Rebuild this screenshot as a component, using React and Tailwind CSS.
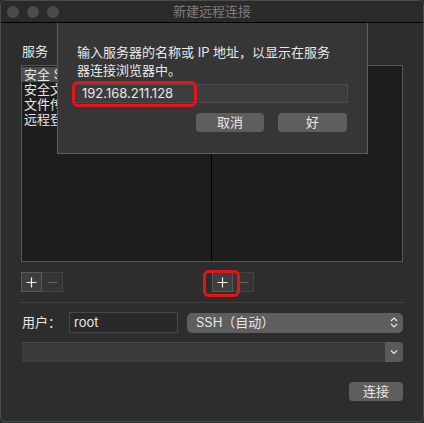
import React from 'react';

const services = ['安全 Shell (ssh)', '安全文件传输 (sftp)', '文件传输 (ftp)', '远程登录 (telnet)'];

// small +/- segmented control under each column
const PlusMinus = ({ highlight }) => (
  <div className="flex">
    <div className="relative w-[21px] h-[20px] bg-[#3e3e3e] border border-[#595959] flex items-center justify-center">
      <svg width="11" height="11" viewBox="0 0 11 11">
        <path d="M5.5 0.5v10M0.5 5.5h10" stroke="#f0f0f0" strokeWidth="1.2" />
      </svg>
      {highlight && (
        <div className="absolute -left-[10px] -top-[3px] w-[37px] h-[27px] border-[3px] border-[#e3151b] rounded-[6px]" />
      )}
    </div>
    <div className="w-[21px] h-[20px] bg-[#343434] border border-l-0 border-[#444] flex items-center justify-center">
      <svg width="11" height="11" viewBox="0 0 11 11">
        <path d="M0.5 5.5h10" stroke="#646464" strokeWidth="1.2" />
      </svg>
    </div>
  </div>
);

export default function App() {
  return (
    <div className="w-[424px] h-[423px] bg-[#24302a] font-[Inter,'Noto_Sans_CJK_SC',sans-serif] text-[13px] text-[#e8e8e8]">
      <div className="relative w-[424px] h-[422px] rounded-[5px] border border-[#4a4a4a] bg-[#2e2d2d] overflow-hidden flex flex-col">
        {/* title bar */}
        <div className="h-[22px] shrink-0 flex items-center border-b border-black bg-[#2b2a2a]">
          <div className="w-[70px] pl-[6px] flex gap-[8px]">
            <span className="w-[12px] h-[12px] rounded-full bg-[#4b4b4b]" />
            <span className="w-[12px] h-[12px] rounded-full bg-[#4b4b4b]" />
            <span className="w-[12px] h-[12px] rounded-full bg-[#4b4b4b]" />
          </div>
          <div className="flex-1 text-center text-[#7e7e7e] leading-[21px]">新建远程连接</div>
          <div className="w-[70px]" />
        </div>

        <div className="flex flex-col px-[20px] pt-[20px]">
          <div className="h-[17px] leading-[17px] pl-[1px]">服务</div>

          {/* services / servers table */}
          <div className="mt-[5px] h-[197px] grid grid-cols-2 border border-[#585858] bg-[#1e1d1d]">
            <div className="border-r border-black pt-[1px] overflow-hidden">
              {services.map((s, i) => (
                <div
                  key={s}
                  className={`h-[15px] leading-[15px] pl-[2px] whitespace-nowrap ${i === 0 ? 'bg-[#4e4e4e]' : ''}`}
                >
                  {s}
                </div>
              ))}
            </div>
            <div />
          </div>

          <div className="mt-[10px] grid grid-cols-2">
            <PlusMinus />
            <div className="pl-[0px]">
              <PlusMinus highlight />
            </div>
          </div>

          <div className="mt-[10px] -mx-[1px] h-px bg-[#414141]" />

          {/* user row */}
          <div className="mt-[9px] h-[21px] flex items-center">
            <div className="w-[48px] pl-[1px]">用户：</div>
            <div className="w-[109px] h-[21px] bg-[#2a2929] border border-[#474747] flex items-center pl-[4px]">
              root
            </div>
            <div className="ml-[9px] w-[216px] h-[20px] rounded-[5px] bg-[#5e5e5e] flex items-center justify-between pl-[9px] pr-[5px]">
              <span>SSH（自动）</span>
              <svg width="8" height="13" viewBox="0 0 8 13">
                <path d="M1 5L4 2L7 5M1 8L4 11L7 8" fill="none" stroke="#e8e8e8" strokeWidth="1.2" />
              </svg>
            </div>
          </div>

          {/* server address combo box */}
          <div className="mt-[9px] ml-[1px] w-[381px] h-[20px] flex">
            <div className="flex-1 bg-[#3b3a3a] border-t border-[#4a4a4a]" />
            <div className="w-[18px] bg-[#5a5a5a] rounded-r-[4px] flex items-center justify-center">
              <svg width="8" height="6" viewBox="0 0 8 6">
                <path d="M1 1.5L4 4.5L7 1.5" fill="none" stroke="#e8e8e8" strokeWidth="1.2" />
              </svg>
            </div>
          </div>

          <div className="mt-[20px] self-end w-[54px] h-[19px] rounded-[4px] bg-[#5e5e5e] flex items-center justify-center">
            连接
          </div>
        </div>

        {/* sheet for entering the server address */}
        <div className="absolute left-[56px] top-[22px] w-[311px] h-[131px] bg-[#363636] border border-t-0 border-[#5d5d5d] pl-[19px] pt-[20px]">
          <div className="leading-[18px]">
            输入服务器的名称或 IP 地址，以显示在服务
            <br />
            器连接浏览器中。
          </div>
          <div className="relative mt-[5px] -ml-[4px] w-[275px] h-[19px] bg-[#3d3d3d] border border-[#4c4c4c] flex items-center pl-[8px]">
            192.168.211.128
            <div className="absolute -left-[2px] -top-[4px] w-[125px] h-[26px] border-[3px] border-[#e3151b] rounded-[6px]" />
          </div>
          <div className="mt-[10px] w-[270px] flex justify-end gap-[14px]">
            <div className="w-[68px] h-[19px] rounded-[4px] bg-[#5e5e5e] flex items-center justify-center">取消</div>
            <div className="w-[69px] h-[19px] rounded-[4px] bg-[#5e5e5e] flex items-center justify-center">好</div>
          </div>
        </div>
      </div>
    </div>
  );
}
